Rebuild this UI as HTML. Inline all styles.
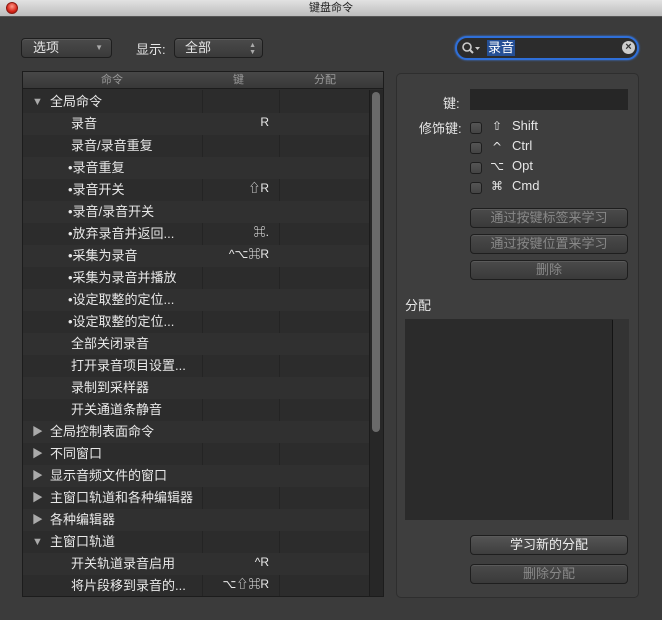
<!DOCTYPE html>
<html><head><meta charset="utf-8"><style>
*{box-sizing:border-box;margin:0;padding:0}
body{width:662px;height:620px;background:#3b3b3b;font-family:"Liberation Sans","Noto Sans CJK SC",sans-serif;color:#e6e6e6;position:relative;overflow:hidden;font-size:13px}
.abs{position:absolute}
#title{left:0;top:0;width:662px;height:17px;background:linear-gradient(#e2e2e2,#bcbcbc);border-bottom:1px solid #555;text-align:center;font-size:11px;color:#222;line-height:17px}
#close{left:6px;top:2px;width:12px;height:12px;border-radius:50%;background:radial-gradient(circle at 50% 35%,#ff9a8a,#d8261a 60%,#9a1008);border:1px solid #8a1a12}
.btn{border:1px solid #1e1e1e;border-radius:4px;background:linear-gradient(#4a4a4a,#3a3a3a);box-shadow:inset 0 1px 0 #5a5a5a}
#list{left:22px;top:71px;width:362px;height:526px;background:#2c2c2c;border:1px solid #1c1c1c;overflow:hidden}
#hdr{left:0;top:0;width:360px;height:17px;background:linear-gradient(#484848,#383838);border-bottom:1px solid #1c1c1c;font-size:11px;color:#999;line-height:16px}
.row{position:absolute;left:0;width:346px;height:22px;line-height:22px;font-size:13px;color:#e8e8e8}
.row.alt{background:#303030}
.key{position:absolute;left:180px;width:66px;text-align:right;font-size:12px}
.tri{position:absolute;left:9px;font-size:11px;color:#aaa}
#rp{left:396px;top:73px;width:243px;height:525px;background:#3e3e3e;border:1px solid #2e2e2e;border-radius:5px}
.cb{position:absolute;width:12px;height:12px;border:1px solid #1e1e1e;border-radius:3px;background:linear-gradient(#555,#444)}
.rb{position:absolute;left:470px;width:158px;height:20px;text-align:center;line-height:18px;font-size:13px;color:#888}
.sym{position:absolute;left:490px;width:14px;text-align:center;font-size:12px;font-family:"DejaVu Sans",sans-serif}
.lab{position:absolute;left:512px}
</style></head><body>
<div id="title" class="abs">键盘命令</div>
<div id="close" class="abs"></div>

<div class="abs btn" style="left:21px;top:38px;width:91px;height:20px;line-height:18px;padding-left:11px;font-size:13px">选项<span style="position:absolute;right:8px;font-size:8px;color:#aaa">▼</span></div>
<div class="abs" style="left:136px;top:39px;font-size:13px">显示:</div>
<div class="abs btn" style="left:174px;top:38px;width:89px;height:20px;line-height:18px;padding-left:10px">全部<span style="position:absolute;right:6px;top:0;font-size:7px;line-height:7px;color:#aaa;padding-top:3px">▲<br>▼</span></div>

<div class="abs" style="left:455px;top:36px;width:184px;height:24px;border:2px solid #2f6fd8;border-radius:12px;background:#2c2c2c;box-shadow:0 0 2px #3c7ce8"></div>
<svg class="abs" style="left:461px;top:41px" width="22" height="14"><circle cx="6" cy="6" r="4" fill="none" stroke="#ccc" stroke-width="1.6"/><line x1="9" y1="9" x2="12" y2="12" stroke="#ccc" stroke-width="2"/><path d="M14 6h5l-2.5 3z" fill="#ccc"/></svg>
<div class="abs" style="left:487px;top:40px;height:16px;line-height:16px;background:#254f95;color:#fff;font-size:13px;padding:0 1px">录音</div>
<div class="abs" style="left:622px;top:41px;width:13px;height:13px;border-radius:50%;background:#ccc;color:#333;font-size:11px;line-height:13px;text-align:center;font-weight:bold">×</div>

<div id="list" class="abs">
<div id="hdr" class="abs"><span class="abs" style="left:78px">命令</span><span class="abs" style="left:210px">键</span><span class="abs" style="left:291px">分配</span></div>
<div class="abs" style="left:179px;top:18px;width:1px;height:510px;background:#242424"></div>
<div class="abs" style="left:256px;top:18px;width:1px;height:510px;background:#242424"></div>
<div class="abs" style="left:346px;top:18px;width:14px;height:510px;background:#272727;border-left:1px solid #1c1c1c"></div>
<div class="abs" style="left:349px;top:20px;width:8px;height:340px;background:#6a6a6a;border-radius:4px"></div>
<div id="rows"></div>
</div>

<div id="rp" class="abs"></div>
<div class="abs" style="left:443px;top:93px">键:</div>
<div class="abs" style="left:470px;top:89px;width:158px;height:21px;background:#262626"></div>
<div class="abs" style="left:419px;top:118px">修饰键:</div>
<div class="cb" style="left:470px;top:122px"></div><div class="sym" style="top:119px">⇧</div><div class="lab" style="top:118px">Shift</div>
<div class="cb" style="left:470px;top:142px"></div><div class="sym" style="top:140px">^</div><div class="lab" style="top:138px">Ctrl</div>
<div class="cb" style="left:470px;top:162px"></div><div class="sym" style="top:159px">⌥</div><div class="lab" style="top:158px">Opt</div>
<div class="cb" style="left:470px;top:182px"></div><div class="sym" style="top:179px">⌘</div><div class="lab" style="top:178px">Cmd</div>
<div class="btn rb" style="top:208px">通过按键标签来学习</div>
<div class="btn rb" style="top:234px">通过按键位置来学习</div>
<div class="btn rb" style="top:260px">删除</div>
<div class="abs" style="left:405px;top:295px">分配</div>
<div class="abs" style="left:405px;top:319px;width:224px;height:201px;background:#2b2b2b"></div>
<div class="abs" style="left:612px;top:320px;width:1px;height:199px;background:#141414"></div>
<div class="abs" style="left:613px;top:319px;width:16px;height:201px;background:#333"></div>
<div class="btn rb" style="top:535px;color:#eee;background:linear-gradient(#555,#3e3e3e)">学习新的分配</div>
<div class="btn rb" style="top:564px">删除分配</div>

<script>
var d=[["▼","全局命令",""],["","录音","R"],["","录音/录音重复",""],["","•录音重复",""],["","•录音开关","⇧R"],["","•录音/录音开关",""],["","•放弃录音并返回...","⌘."],["","•采集为录音","^⌥⌘R"],["","•采集为录音并播放",""],["","•设定取整的定位...",""],["","•设定取整的定位...",""],["","全部关闭录音",""],["","打开录音项目设置...",""],["","录制到采样器",""],["","开关通道条静音",""],["▶","全局控制表面命令",""],["▶","不同窗口",""],["▶","显示音频文件的窗口",""],["▶","主窗口轨道和各种编辑器",""],["▶","各种编辑器",""],["▼","主窗口轨道",""],["","开关轨道录音启用","^R"],["","将片段移到录音的...","⌥⇧⌘R"]];
var h="";d.forEach(function(r,i){var t=19+i*22;var lft=r[0]?27:(r[1][0]=="•"?45:48);h+='<div class="row'+(i%2?' alt':'')+'" style="top:'+t+'px">'+(r[0]?'<span class="tri">'+r[0]+'</span>':'')+'<span style="position:absolute;left:'+lft+'px">'+r[1]+'</span><span class="key" style="line-height:18px">'+r[2]+'</span></div>';});
document.getElementById("rows").innerHTML=h;
</script>
</body></html>
